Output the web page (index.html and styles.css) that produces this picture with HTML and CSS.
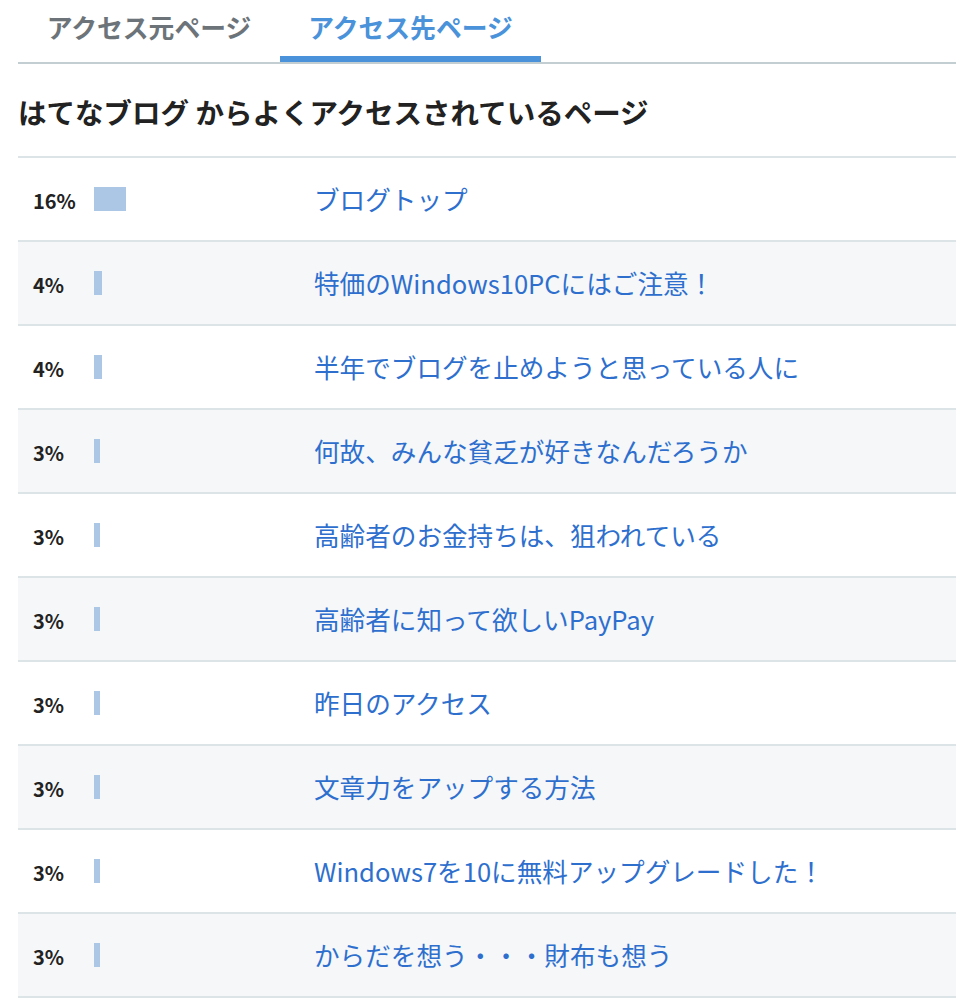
FILE: index.html
```html
<!DOCTYPE html>
<html lang="ja">
<head>
<meta charset="utf-8">
<title>アクセス先ページ</title>
<link rel="stylesheet" href="styles.css">
</head>
<body>
<div class="wrap">
  <ul class="tabs">
    <li class="tab">アクセス元ページ</li>
    <li class="tab active">アクセス先ページ</li>
  </ul>
  <h2 class="heading">はてなブログ からよくアクセスされているページ</h2>
  <div class="list">
    <div class="row"><div class="stat"><span class="pct">16%</span><span class="bar" style="width:32px"></span></div><a class="link" href="#">ブログトップ</a></div>
    <div class="row"><div class="stat"><span class="pct">4%</span><span class="bar" style="width:8px"></span></div><a class="link" href="#">特価のWindows10PCにはご注意！</a></div>
    <div class="row"><div class="stat"><span class="pct">4%</span><span class="bar" style="width:8px"></span></div><a class="link" href="#">半年でブログを止めようと思っている人に</a></div>
    <div class="row"><div class="stat"><span class="pct">3%</span><span class="bar" style="width:6px"></span></div><a class="link" href="#">何故、みんな貧乏が好きなんだろうか</a></div>
    <div class="row"><div class="stat"><span class="pct">3%</span><span class="bar" style="width:6px"></span></div><a class="link" href="#">高齢者のお金持ちは、狙われている</a></div>
    <div class="row"><div class="stat"><span class="pct">3%</span><span class="bar" style="width:6px"></span></div><a class="link" href="#">高齢者に知って欲しいPayPay</a></div>
    <div class="row"><div class="stat"><span class="pct">3%</span><span class="bar" style="width:6px"></span></div><a class="link" href="#">昨日のアクセス</a></div>
    <div class="row"><div class="stat"><span class="pct">3%</span><span class="bar" style="width:6px"></span></div><a class="link" href="#">文章力をアップする方法</a></div>
    <div class="row"><div class="stat"><span class="pct">3%</span><span class="bar" style="width:6px"></span></div><a class="link" href="#">Windows7を10に無料アップグレードした！</a></div>
    <div class="row"><div class="stat"><span class="pct">3%</span><span class="bar" style="width:6px"></span></div><a class="link" href="#">からだを想う・・・財布も想う</a></div>
  </div>
</div>
</body>
</html>
```

FILE: styles.css
```css
html, body {
  margin: 0;
  padding: 0;
  background: #ffffff;
}

body {
  font-family: "Noto Sans CJK JP", "Noto Sans", sans-serif;
  color: #222222;
  overflow: hidden;
}

.wrap {
  padding-left: 18px;
}

.tabs {
  list-style: none;
  margin: 0;
  padding: 0;
  display: flex;
  border-bottom: 2px solid #c3ced3;
}

.tab {
  width: 262px;
  height: 62px;
  box-sizing: border-box;
  text-align: center;
  line-height: 54px;
  font-size: 25.8px;
  font-weight: 700;
  color: #6c7479;
  border-bottom: 6px solid transparent;
}

.tab.active {
  width: 261px;
  color: #4a92da;
  border-bottom-color: #4a92da;
}

.heading {
  margin: 0;
  padding: 30px 0 26px;
  line-height: 36px;
  font-size: 28.5px;
  font-weight: 700;
  color: #222222;
}

.list {
  border-top: 2px solid #dde4e8;
}

.row {
  display: flex;
  align-items: center;
  height: 84px;
  box-sizing: border-box;
  border-bottom: 2px solid #dde4e8;
  background: #ffffff;
}

.row:nth-child(even) {
  background: #f5f7f9;
}

.stat {
  width: 296px;
  box-sizing: border-box;
  padding-left: 15px;
  display: flex;
  align-items: center;
}

.pct {
  width: 61px;
  font-size: 20px;
  font-weight: 700;
  color: #222222;
  line-height: 24px;
  padding-top: 4px;
}

.bar {
  display: block;
  height: 24px;
  background: #abc7e5;
}

.link {
  font-size: 25.6px;
  color: #2e6fce;
  text-decoration: none;
  line-height: 36px;
}
```
